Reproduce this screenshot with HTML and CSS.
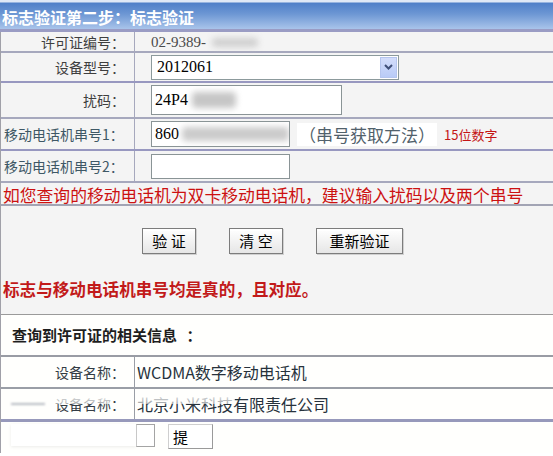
FILE: index.html
```html
<!DOCTYPE html>
<html lang="zh-CN">
<head>
<meta charset="utf-8">
<title>标志验证</title>
<link rel="stylesheet" href="styles.css">
</head>
<body>
<div class="header">标志验证第二步：标志验证</div>
<div class="form">
  <div class="row r1">
    <div class="label">许可证编号：</div>
    <div class="value serif">02-9389-<span class="blur b1"></span></div>
  </div>
  <div class="row r2 strong">
    <div class="label">设备型号：</div>
    <div class="value">
      <div class="select">
        <span class="serif">2012061</span>
        <span class="arrow"><svg width="9" height="6" viewBox="0 0 9 6"><path d="M1 1 L4.5 4.5 L8 1" fill="none" stroke="#3f4f78" stroke-width="2"/></svg></span>
      </div>
    </div>
  </div>
  <div class="row r3">
    <div class="label">扰码：</div>
    <div class="value"><div class="input wide serif">24P4<span class="blur b2"></span></div></div>
  </div>
  <div class="row r4 strong">
    <div class="label left">移动电话机串号1：</div>
    <div class="value">
      <div class="input serif">860<span class="blur b3"></span></div>
      <span class="howto">（串号获取方法）</span>
      <span class="hint">15位数字</span>
    </div>
  </div>
  <div class="row r5">
    <div class="label left">移动电话机串号2：</div>
    <div class="value"><div class="input"></div></div>
  </div>
  <div class="row r6">
    <div class="note">如您查询的移动电话机为双卡移动电话机，建议输入扰码以及两个串号</div>
  </div>
  <div class="actions">
    <div class="buttons">
      <button class="btn">验 证</button>
      <button class="btn">清 空</button>
      <button class="btn wide-btn">重新验证</button>
    </div>
    <div class="verdict">标志与移动电话机串号均是真的，且对应。</div>
  </div>
</div>
<div class="result">
  <div class="result-title">查询到许可证的相关信息 <span class="colon">：</span></div>
  <div class="rrow">
    <div class="rlabel">设备名称：</div>
    <div class="rvalue">WCDMA数字移动电话机</div>
  </div>
  <div class="rrow last">
    <div class="rlabel"><span class="smear-dash"></span><span class="obscure">设备名称</span>：</div>
    <div class="rvalue"><span class="obscure">北京小米科技</span>有限责任公司</div>
  </div>
  <div class="tail">
    <div class="ghost"></div>
    <div class="tinput"></div>
    <button class="tbtn">提</button>
  </div>
</div>
</body>
</html>
```
FILE: styles.css
```css
html, body {
  margin: 0;
  padding: 0;
  background: #ffffff;
}
body {
  width: 553px;
  height: 456px;
  overflow: hidden;
  font-family: "Noto Sans CJK SC", "Liberation Sans", sans-serif;
}
.serif {
  font-family: "Liberation Serif", "Noto Sans CJK SC", serif;
}

/* header */
.header {
  height: 32px;
  box-sizing: border-box;
  padding: 3px 0 0 2px;
  line-height: 28px;
  font-size: 16px;
  font-weight: bold;
  color: #ffffff;
  background: linear-gradient(to bottom,
    #dfe8f6 0, #dfe8f6 2px,
    #4f7fc8 3px, #6d97d4 14px, #a9c4ea 29px,
    #e6eef9 30px, #ffffff 31px, #ffffff 32px);
  border-bottom: 3px solid #9a9cc4;
}

/* form */
.form {
  background: #f4f4f4;
  border-left: 1px solid #a0a0a8;
}
.row {
  display: grid;
  grid-template-columns: 134px 1fr;
  border-bottom: 2px solid #a6a8bd;
}
.row.strong {
  border-bottom-color: #9898c0;
}
.r1 { height: 19px; }
.r2 { height: 28px; }
.r3 { height: 34px; }
.r4 { height: 30px; }
.r5 { height: 30px; }
.r6 {
  height: 21px;
  grid-template-columns: 1fr;
  border-bottom-color: #a2a4b4;
}
.label {
  display: flex;
  align-items: center;
  justify-content: flex-end;
  padding-right: 9px;
  border-right: 1px solid #a6a8bd;
  font-size: 14px;
  color: #3f3f3f;
  white-space: nowrap;
}
.label.left {
  justify-content: flex-start;
  padding-left: 3px;
  padding-right: 0;
  color: #3e5866;
}
.value {
  display: flex;
  align-items: center;
  padding-left: 16px;
  font-size: 15px;
  color: #333333;
  white-space: nowrap;
}
.r1 .value {
  color: #4a4a4a;
}
.blur {
  display: inline-block;
  background: #c6c6c6;
  filter: blur(3px);
  border-radius: 4px;
}
.b1 { width: 46px; height: 9px; margin-left: 6px; background: #cfcfcf; }
.b2 { width: 44px; height: 16px; margin-left: 4px; }
.b3 { width: 110px; height: 14px; margin-left: 3px; background: #cbcbcb; }

.select {
  width: 248px;
  height: 25px;
  box-sizing: border-box;
  border: 1px solid #8c9a9c;
  background: #ffffff;
  display: flex;
  align-items: center;
  justify-content: space-between;
  padding-left: 5px;
  padding-right: 1px;
  font-size: 16px;
  color: #000;
}
.arrow {
  width: 17px;
  height: 21px;
  box-sizing: border-box;
  border: 1px solid #b5c5ee;
  background: linear-gradient(#d3ddfb, #b9cbf7);
  display: flex;
  align-items: center;
  justify-content: center;
}
.input {
  width: 139px;
  height: 26px;
  box-sizing: border-box;
  border: 1px solid #8a9496;
  background: #ffffff;
  display: flex;
  align-items: center;
  padding-left: 3px;
  font-size: 16px;
  color: #000;
  overflow: hidden;
}
.input.wide {
  width: 191px;
  height: 30px;
}
.r5 .input {
  height: 25px;
}
.howto {
  margin-left: 7px;
  padding: 0 2px;
  background: #ffffff;
  font-size: 17px;
  line-height: 23px;
  color: #51616b;
}
.hint {
  margin-left: 7px;
  font-size: 13px;
  color: #c41616;
}
.note {
  display: flex;
  align-items: center;
  padding-left: 2px;
  font-size: 16.8px;
  color: #cc1111;
  white-space: nowrap;
}

/* actions */
.actions {
  height: 109px;
  box-sizing: border-box;
  padding-top: 22px;
  border-bottom: 1px solid #9a9a9a;
  display: flex;
  flex-direction: column;
}
.buttons {
  display: flex;
  gap: 33px;
  padding-left: 141px;
}
.btn {
  width: 54px;
  height: 26px;
  padding: 0;
  margin: 0;
  border: 1px solid #7c7c7c;
  background: linear-gradient(#ffffff, #f0f0f0 60%, #e6e6e6);
  box-shadow: inset 0 2px 0 #ffffff, 1px 1px 0 #d0d0d0;
  font-family: "Noto Sans CJK SC", sans-serif;
  font-size: 15px;
  color: #000;
  line-height: 22px;
}
.btn.wide-btn {
  width: 87px;
}
.verdict {
  margin-top: 25px;
  padding-left: 2px;
  font-size: 16.6px;
  line-height: 20px;
  font-weight: bold;
  color: #c21a1a;
  white-space: nowrap;
}

/* result */
.result {
  background: #fffffd;
  border-left: 1px solid #a0a0a8;
}
.result-title {
  height: 42px;
  box-sizing: border-box;
  padding: 9px 0 0 11px;
  font-size: 15px;
  font-weight: bold;
  color: #1e1e1e;
  border-bottom: 2px solid #999ca4;
  white-space: nowrap;
}
.colon {
  margin-left: 6px;
}
.rrow {
  display: grid;
  grid-template-columns: 134px 1fr;
  height: 30px;
  border-bottom: 2px solid #9a9ea6;
}
.rrow.last {
  height: 30px;
  border-bottom: 3px solid #9799bb;
}
.rlabel {
  display: flex;
  align-items: center;
  justify-content: flex-end;
  padding-right: 9px;
  border-right: 1px solid #9a9ea6;
  font-size: 14px;
  color: #333c44;
  white-space: nowrap;
}
.rvalue {
  display: flex;
  align-items: center;
  padding-left: 2px;
  font-size: 16px;
  color: #27323c;
  white-space: nowrap;
}
.obscure {
  position: relative;
}
.obscure::after {
  content: "";
  position: absolute;
  left: -2px;
  right: -2px;
  top: 0;
  height: 50%;
  background: linear-gradient(rgba(255,255,253,0.95), rgba(255,255,253,0.55));
}
.smear-dash {
  display: inline-block;
  width: 34px;
  height: 2px;
  margin-right: 10px;
  background: #b8bcc4;
  filter: blur(1px);
}

/* tail */
.tail {
  display: flex;
  align-items: flex-start;
  padding-top: 2px;
  height: 29px;
}
.ghost {
  width: 125px;
  height: 22px;
  margin-left: 10px;
  background: #ffffff;
  box-shadow: 0 1px 3px rgba(0,0,0,0.08);
}
.tinput {
  width: 19px;
  height: 23px;
  box-sizing: border-box;
  border: 1px solid #a4a4a4;
  border-left-color: #c8c8c8;
  background: #ffffff;
}
.tbtn {
  margin-left: 13px;
  width: 45px;
  height: 25px;
  padding: 0 0 0 4px;
  text-align: left;
  border: 1px solid #9a9a9a;
  border-top-color: #cfcfcf;
  border-left-color: #cfcfcf;
  background: #ffffff;
  font-family: "Noto Sans CJK SC", sans-serif;
  font-size: 15px;
  color: #000;
}
```
